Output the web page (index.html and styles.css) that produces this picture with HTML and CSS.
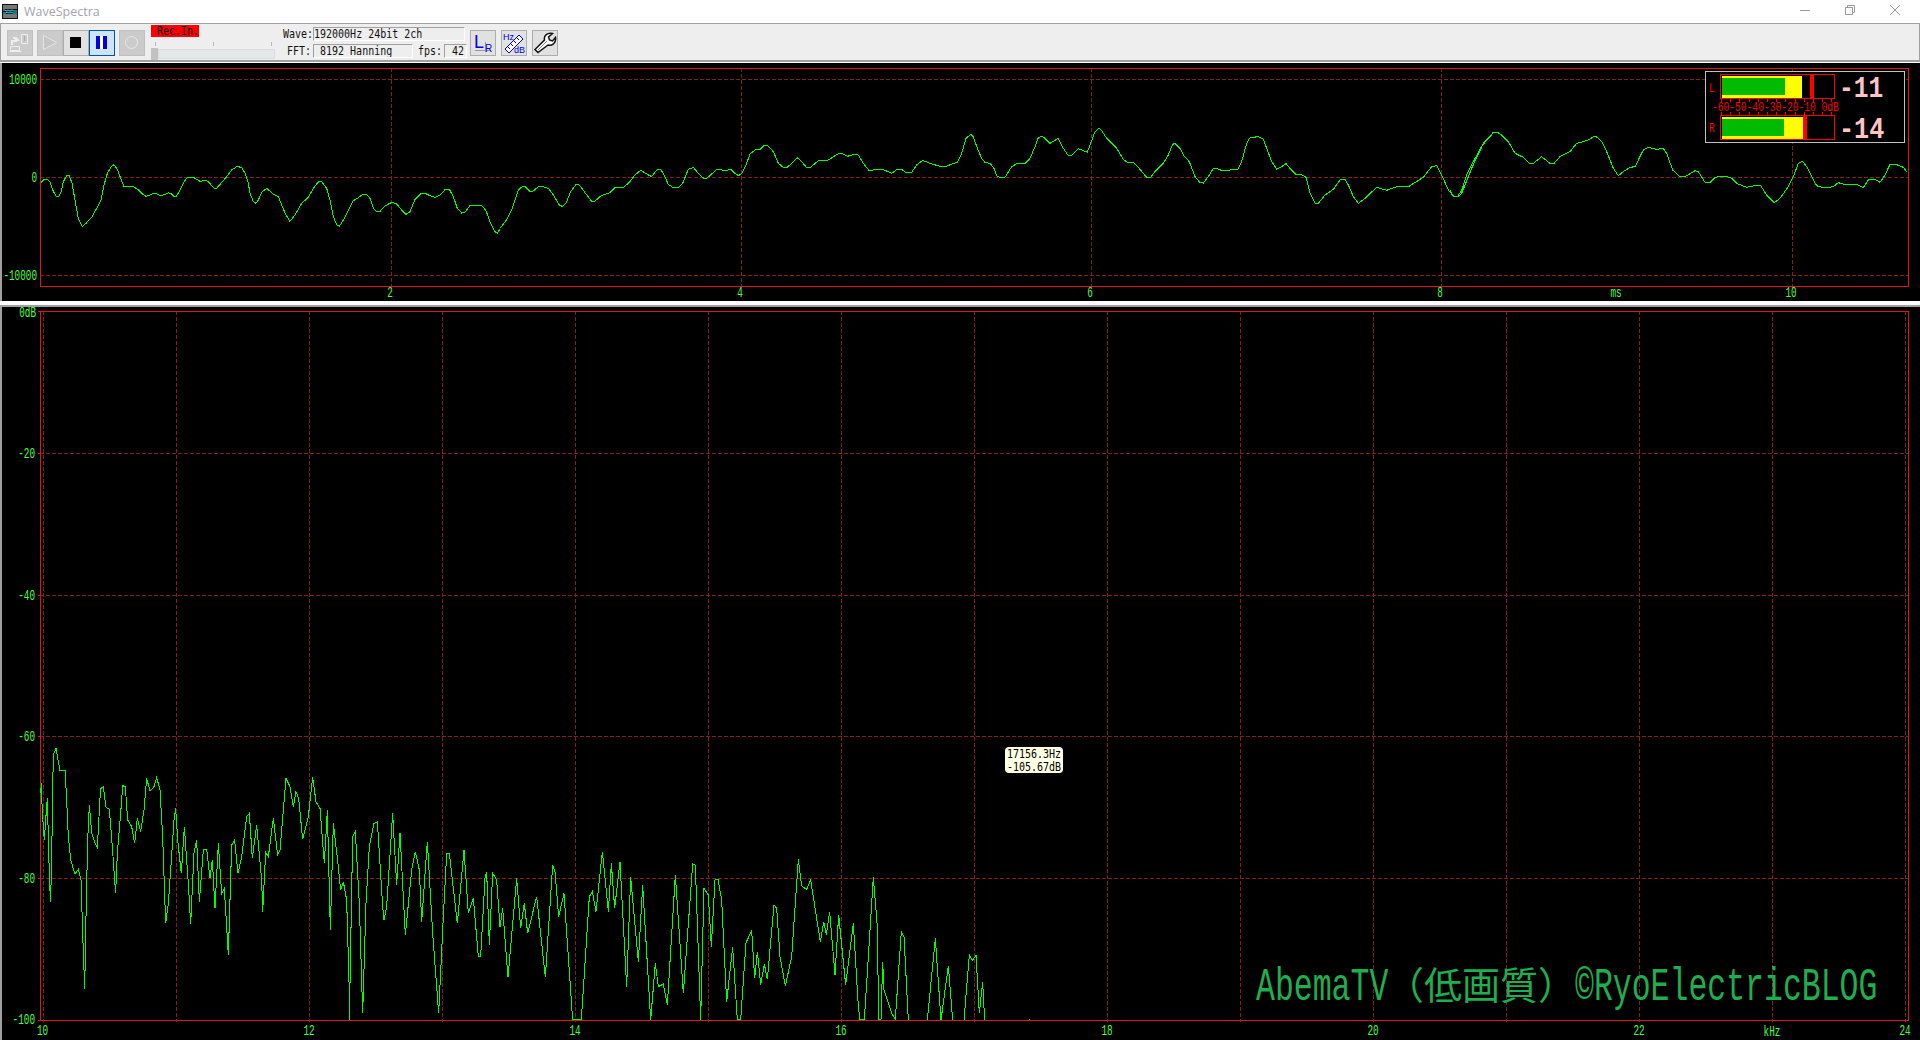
FILE: index.html
```html
<!DOCTYPE html>
<html lang="en">
<head>
    <meta charset="UTF-8">
    <title>WaveSpectra</title>
    <link rel="stylesheet" href="styles.css">
</head>
<body>
    <div class="titlebar">
        <svg class="app-icon" width="16" height="15" viewBox="0 0 16 15">
            <rect width="16" height="15" fill="#111"/>
            <path d="M1 2h14M1 4h14" stroke="#ddd"/>
            <path d="M1 6h2l1 1 2-1 2 1 2-1 2 1h3M1 9h3l1-1 2 1 2-1 2 1h4" stroke="#28d8e8" fill="none"/>
            <path d="M1 11h14M1 13h14" stroke="#ddd"/>
        </svg>
        <span class="app-name">WaveSpectra</span>
        <div class="win-controls">
            <svg width="10" height="10" viewBox="0 0 10 10"><path d="M0 5.5h10" stroke="#999"/></svg>
            <svg width="10" height="10" viewBox="0 0 10 10"><path d="M.5 2.5h7v7h-7zM2.5 2.5v-2h7v7h-2" fill="none" stroke="#999"/></svg>
            <svg width="10" height="10" viewBox="0 0 10 10"><path d="M0 0l10 10M10 0L0 10" stroke="#999"/></svg>
        </div>
    </div>

    <div class="toolbar">
        <div class="tool-btn off first">
            <svg width="25" height="25" viewBox="0 0 25 25" fill="none" stroke="#eee">
                <path d="M14.500 4.500h6v9h-6zM3.500 16.500h9v4h-9zM2.500 21.500h12"/>
                <path d="M5 15v-4h4V8l-3 0M9 8l3 3" stroke-width="2"/>
                <path d="M17.500 6v5" stroke="#aaa"/>
            </svg>
        </div>
        <div class="tool-btn off gap">
            <svg width="25" height="25" viewBox="0 0 25 25"><path d="M6.500 5.500l13 7-13 7z" fill="#c4c4c4" stroke="#e6e6e6"/></svg>
        </div>
        <div class="tool-btn">
            <svg width="25" height="25" viewBox="0 0 25 25"><rect x="7" y="7" width="11" height="11" fill="#000"/></svg>
        </div>
        <div class="tool-btn on">
            <svg width="25" height="25" viewBox="0 0 25 25">
                <rect x="7" y="6" width="11" height="13" fill="#fff"/>
                <path d="M7 6h4v13H7zM14 6h4v13h-4z" fill="#0000e0"/>
            </svg>
        </div>
        <div class="tool-btn off gap">
            <svg width="25" height="25" viewBox="0 0 25 25"><circle cx="12.500" cy="12.500" r="6" fill="none" stroke="#e8e8e8"/></svg>
        </div>

        <div class="rec-group">
            <div class="rec-label"><span class="px-text">Rec.In.</span></div>
            <div class="slider-ticks"><i></i><i></i><i></i></div>
            <div class="slider">
                <div class="slider-thumb"></div>
                <div class="slider-track"></div>
            </div>
        </div>

        <div class="info">
            <div class="info-row">
                <div class="info-label wide"><span class="px-text">Wave:</span></div>
                <div class="info-box wave-box"><span class="px-text">192000Hz 24bit 2ch</span></div>
            </div>
            <div class="info-row">
                <div class="info-label wide"><span class="px-text">FFT:</span></div>
                <div class="info-box fft-box"><span class="px-text">8192 Hanning</span></div>
                <div class="info-label fps"><span class="px-text">fps:</span></div>
                <div class="info-box fps-box"><span class="px-text">42</span></div>
            </div>
        </div>

        <div class="tool-btn gap-wide">
            <svg width="25" height="25" viewBox="0 0 25 25">
                <path d="M5 20.500h16M15.500 12v10" stroke="#999" fill="none"/>
                <text class="btn-letter" x="4" y="18" font-size="18">L</text>
                <text class="btn-letter" x="15" y="22" font-size="10">R</text>
            </svg>
        </div>
        <div class="tool-btn gap-wide">
            <svg width="25" height="25" viewBox="0 0 25 25">
                <path d="M4 19L18 5l4 4L8 23z" fill="#fff" stroke="#0000d0"/>
                <path d="M7 17l2 2M10 14l2 2M13 11l2 2M16 8l2 2" stroke="#0000d0"/>
                <text class="btn-letter" x="2" y="10" font-size="9">Hz</text>
                <text class="btn-letter" x="13" y="23" font-size="9">dB</text>
            </svg>
        </div>
        <div class="tool-btn gap-wide">
            <svg width="25" height="25" viewBox="0 0 25 25">
                <path d="M3 19.500L12.500 10c-1-4 3-8 8-6.500l-4 3.500 1 3 3 1 3-3.500c1 5-3.500 9-7.500 7.500L6 22.500z" fill="#fff" stroke="#111" stroke-width="1.500"/>
                <path d="M6 20l9-9" stroke="#888"/>
            </svg>
        </div>
    </div>

    <div class="panel wave-panel">
        <svg class="plot" width="1918" height="238" viewBox="2 63 1918 238">
            <path class="grid" d="M40 79.500H1909M40 177.500H1909M40 275.500H1909M391.500 68V289M741.500 68V289M1091.500 68V289M1441.500 68V289M1792.500 68V289"/>
            <rect class="frame" x="40.500" y="68.500" width="1868" height="218"/>

            <text class="tick-label" text-anchor="end" transform="translate(37 84) scale(.667 1)">10000</text>
            <text class="tick-label" text-anchor="end" transform="translate(37 182) scale(.667 1)">0</text>
            <text class="tick-label" text-anchor="end" transform="translate(37 280) scale(.667 1)">-10000</text>
            <text class="tick-label" text-anchor="middle" transform="translate(390 297) scale(.667 1)">2</text>
            <text class="tick-label" text-anchor="middle" transform="translate(740 297) scale(.667 1)">4</text>
            <text class="tick-label" text-anchor="middle" transform="translate(1090 297) scale(.667 1)">6</text>
            <text class="tick-label" text-anchor="middle" transform="translate(1440 297) scale(.667 1)">8</text>
            <text class="tick-label" text-anchor="middle" transform="translate(1791 297) scale(.667 1)">10</text>
            <text class="tick-label" text-anchor="middle" transform="translate(1616 297) scale(.667 1)">ms</text>

            <polyline class="trace" transform="translate(0 60) scale(.33333)" points="122,370 130,360 140,357 150,365 158,390 168,408 176,411 184,395 190,365 200,347 208,347 216,370 225,420 235,475 247,499 258,490 275,472 290,445 303,420 312,375 322,340 335,318 342,314 352,328 362,355 372,380 385,381 400,380 412,387 425,400 438,409 450,405 460,400 470,401 482,408 495,403 505,398 515,402 522,410 530,408 540,390 552,365 562,352 580,352 590,358 600,364 618,361 628,368 640,383 648,387 660,373 680,350 695,330 712,319 725,323 735,340 745,370 750,400 760,425 768,430 775,420 785,397 800,385 812,395 820,403 835,410 845,435 858,465 870,484 885,465 905,430 925,412 940,385 955,366 965,365 980,385 990,420 1000,470 1010,495 1018,499 1030,480 1045,450 1060,422 1075,413 1090,402 1100,403 1110,415 1120,445 1130,454 1140,454 1155,438 1175,427 1190,432 1205,450 1218,463 1230,455 1245,418 1262,401 1275,400 1290,407 1305,412 1320,405 1335,389 1348,388 1360,410 1372,445 1385,459 1395,457 1410,437 1425,436 1445,436 1458,452 1470,485 1485,515 1492,520 1500,507"/>
            <polyline class="trace" transform="translate(500 60) scale(.33333)" points="0,505 18,482 35,450 55,390 68,379 75,380 90,394 100,393 115,380 130,380 145,385 160,405 178,435 187,439 198,430 212,395 228,374 238,375 255,398 275,424 285,423 305,406 330,398 345,383 372,381 390,365 405,345 422,331 440,342 455,350 470,330 482,328 490,340 505,373 520,383 535,383 548,370 565,328 580,322 595,340 610,354 620,355 650,329 680,331 692,327 705,340 716,347 725,340 738,315 750,282 765,270 778,270 792,257 803,257 820,275 835,310 850,322 862,322 892,293 905,305 920,323 930,323 955,302 985,300 1015,281 1025,280 1042,289 1060,284 1075,285 1090,310 1108,333 1125,328 1148,328 1175,340 1190,329 1205,328 1218,338 1235,337 1250,315 1268,301 1290,310 1320,319 1340,319 1360,310 1372,308 1385,280 1398,235 1412,223 1420,230 1432,265 1445,295 1455,307 1470,310 1482,325 1490,348 1500,352"/>
            <polyline class="trace" transform="translate(1000 60) scale(.33333)" points="0,352 15,352 35,320 50,311 75,311 90,295 105,260 115,233 125,229 135,235 150,250 175,235 190,265 205,287 215,287 235,266 250,272 262,276 272,250 285,215 297,205 305,212 320,235 350,265 370,298 380,306 400,308 415,322 440,352 452,352 465,335 490,310 505,285 518,253 525,250 540,265 550,285 568,305 585,350 600,368 610,369 625,350 640,325 650,325 668,333 690,330 712,330 725,305 740,250 750,233 775,230 790,238 800,265 815,305 830,327 845,320 858,311 870,325 890,345 905,344 918,352 930,400 945,430 955,430 975,405 1000,388 1020,360 1035,357 1045,375 1060,410 1075,430 1095,415 1130,382 1160,391 1190,380 1225,380 1270,352 1295,320 1310,317 1325,345 1345,390 1360,408 1375,410 1385,400 1415,325 1448,255 1480,218 1495,218 1500,222"/>
            <polyline class="trace" transform="translate(1450 120) scale(.33333)" points="0,210 10,228 22,230 35,212 50,165 70,125 100,70 130,37 140,37 155,45 175,65 195,100 220,112 240,132 250,130 275,110 300,130 312,130 330,110 360,95 380,70 410,62 430,51 440,51 455,65 470,95 490,145 505,167 520,155 540,142 555,140 565,120 580,90 595,82 620,88 640,85 650,100 668,150 690,170 705,170 735,152 745,155 765,187 780,187 795,172 825,168 845,175 860,190 890,202 915,197 932,197 950,225 973,248 990,235 1015,200 1030,170 1045,130 1058,124 1070,140 1095,190 1105,200 1130,203 1150,200 1165,188 1190,195 1220,193 1240,203 1255,180 1275,178 1290,187 1305,165 1320,133 1335,132 1360,142 1370,155"/>

            <!-- level meter, painted on the same canvas -->
            <rect class="vu-box" x="1705.500" y="71.500" width="199" height="71"/>
            <rect class="vu-bar" x="1720.500" y="74.500" width="114" height="24"/>
            <rect x="1722" y="76" width="80" height="22" fill="#ff0"/>
            <rect x="1722" y="78" width="63" height="17" fill="#00bb00"/>
            <rect x="1810" y="75" width="4" height="23" fill="#f00"/>
            <rect class="vu-bar" x="1720.500" y="115.500" width="114" height="24"/>
            <rect x="1722" y="117" width="81" height="22" fill="#ff0"/>
            <rect x="1722" y="119" width="62" height="17" fill="#00bb00"/>
            <rect x="1803" y="116" width="4" height="23" fill="#f00"/>
            <path class="vu-ticks" d="M1721 100.500H1835M1721 113.500H1835"/>
            <text class="vu-text" transform="translate(1709 92) scale(.74 1)">L</text>
            <text class="vu-text" transform="translate(1709 132) scale(.74 1)">R</text>
            <text class="vu-text" transform="translate(1712 111) scale(.74 1)">-60-50-40-30-20-10 0dB</text>
            <text class="vu-num" transform="translate(1839 97) scale(.82 1)">-11</text>
            <text class="vu-num" transform="translate(1839 138) scale(.84 1)">-14</text>
        </svg>
    </div>

    <div class="panel spectrum-panel">
        <svg class="plot" width="1918" height="733" viewBox="2 307 1918 733">
            <path class="grid" d="M40 453.500H1909M40 595.500H1909M40 736.500H1909M40 878.500H1909M43.500 311V1022M176.500 311V1022M309.500 311V1022M442.500 311V1022M575.500 311V1022M708.500 311V1022M841.500 311V1022M974.500 311V1022M1107.500 311V1022M1240.500 311V1022M1373.500 311V1022M1506.500 311V1022M1639.500 311V1022M1772.500 311V1022M1905.500 311V1022"/>
            <path class="frame-tick" d="M38 311.500h3M38 453.500h3M38 595.500h3M38 736.500h3M38 878.500h3M38 1020.500h3"/>
            <rect class="frame" x="40.500" y="311.500" width="1868" height="709"/>

            <text class="tick-label" text-anchor="end" transform="translate(36 317) scale(.667 1)">0dB</text>
            <text class="tick-label" text-anchor="end" transform="translate(35 458) scale(.667 1)">-20</text>
            <text class="tick-label" text-anchor="end" transform="translate(35 600) scale(.667 1)">-40</text>
            <text class="tick-label" text-anchor="end" transform="translate(35 741) scale(.667 1)">-60</text>
            <text class="tick-label" text-anchor="end" transform="translate(35 883) scale(.667 1)">-80</text>
            <text class="tick-label" text-anchor="end" transform="translate(35 1024) scale(.667 1)">-100</text>
            <text class="tick-label" text-anchor="middle" transform="translate(42.500 1035) scale(.667 1)">10</text>
            <text class="tick-label" text-anchor="middle" transform="translate(309 1035) scale(.667 1)">12</text>
            <text class="tick-label" text-anchor="middle" transform="translate(575 1035) scale(.667 1)">14</text>
            <text class="tick-label" text-anchor="middle" transform="translate(841 1035) scale(.667 1)">16</text>
            <text class="tick-label" text-anchor="middle" transform="translate(1107 1035) scale(.667 1)">18</text>
            <text class="tick-label" text-anchor="middle" transform="translate(1373 1035) scale(.667 1)">20</text>
            <text class="tick-label" text-anchor="middle" transform="translate(1639 1035) scale(.667 1)">22</text>
            <text class="tick-label" text-anchor="middle" transform="translate(1772 1036) scale(.667 1)">kHz</text>
            <text class="tick-label" text-anchor="middle" transform="translate(1905 1035) scale(.667 1)">24</text>

            <polyline class="trace" transform="translate(0 720) scale(.33333)" points="122,220 124,190 127,280 133,360 137,300 142,235 146,390 149,495 152,545 157,300 158,175 162,100 168,85 175,125 180,152 195,150 200,240 205,350 212,420 225,462 235,448 243,480 248,640 252,750 254,808 258,590 263,360 268,255 275,340 285,370 292,382 300,235 303,205 310,200 318,262 328,268 337,380 345,495 347,518 352,400 362,280 368,197 376,200 383,300 395,320 404,370 412,295 422,335 432,270 440,175 450,213 462,200 470,172 480,210 488,350 497,610 505,550 512,450 522,300 527,265 534,370 544,460 553,320 565,490 572,612 582,400 590,360 598,545 610,390 620,388 630,475 637,420 645,565 655,370 665,520 673,505 685,705 695,375 704,360 714,460 725,410 740,290 748,280 757,415 770,315 785,480 788,575 797,397 805,410 820,295 833,405 840,390 858,175 870,200 880,260 888,215 896,235 908,358 925,290 938,172 948,245 960,265 973,430 982,270 991,630 1000,310 1015,440 1022,510 1030,485 1040,540 1048,820 1050,900"/>
            <polyline class="trace" transform="translate(340 800) scale(.33333)" points="28,660 38,110 46,95 58,310 68,640 78,310 88,140 102,70 112,65 128,320 132,360 140,320 158,40 170,255 180,98 196,405 215,210 226,155 238,210 245,365 262,125 278,400 296,640 310,350 320,160 328,160 352,370 372,150 385,340 400,295 415,470 422,470 435,235 440,215 448,435 458,220 470,240 480,380 488,325 504,532 530,235 542,385 553,310 563,400 590,290 616,532 638,195 645,215 656,350 672,280 698,660 724,660 748,290 757,275 768,335 787,155 805,335 814,190 824,325 840,185 860,560 872,232 895,485 908,255 932,660 946,490 955,560 970,552 982,615 1006,225 1030,580"/>
            <polyline class="trace" transform="translate(680 820) scale(.33333)" points="10,520 38,132 46,135 62,600 72,205 85,225 94,380 105,180 114,178 125,240 140,545 158,382 172,600 182,600 198,368 215,332 224,475 232,395 242,495 253,432 262,478 282,255 290,265 300,410 316,498 335,410 355,118 365,198 380,208 392,180 421,365 431,305 439,345 449,275 465,465 476,285 497,495 520,310 535,560 540,600 553,600 580,172 592,320 596,600 603,600 608,425 612,510 635,580 646,597 664,335 672,350 685,600"/>
            <polyline class="trace" transform="translate(680 820) scale(.33333)" points="742,600 766,355 783,600 785,585 805,438 818,600"/>
            <polyline class="trace" transform="translate(680 820) scale(.33333)" points="852,600 868,405 878,422 888,405 898,580 908,485 914,600"/>
            <path class="trace" d="M1029 1019h1"/>

            <text class="caption latin" transform="translate(1256 1000) scale(.685 1)">AbemaTV</text>
            <text class="caption cjk" x="1386" y="999">（低画質）</text>
            <text class="caption latin" transform="translate(1575 1000) scale(.685 1)">©RyoElectricBLOG</text>
        </svg>
        <div class="cursor-tip">
            <span class="px-text">17156.3Hz</span>
            <span class="px-text">-105.67dB</span>
        </div>
    </div>
</body>
</html>
```

FILE: styles.css
```css
html, body {
    margin: 0;
    height: 1040px;
    overflow: hidden;
}

body {
    display: flex;
    flex-direction: column;
    background-color: #000;
    font-family: "Liberation Mono", monospace;
}

/* title bar */
.titlebar {
    display: flex;
    align-items: center;
    height: 23px;
    flex: none;
    padding-left: 2px;
    background-color: #fff;
}

.app-icon {
    margin-top: -1px;
}

.app-name {
    margin-left: 6px;
    font-family: "Open Sans", sans-serif;
    font-size: 12.5px;
    color: #a3a3ad;
}

.win-controls {
    display: flex;
    gap: 35px;
    margin-left: auto;
    margin-right: 20px;
    margin-top: -3px;
}

/* toolbar */
.toolbar {
    display: flex;
    align-items: flex-start;
    box-sizing: border-box;
    height: 39px;
    flex: none;
    font-size: 10px;
    line-height: 12px;
    background-color: #eee;
    border-top: 1px solid #a0a0a0;
    border-left: 1px solid #a0a0a0;
    border-right: 1px solid #a0a0a0;
    border-bottom: 2px solid #a0a0a0;
    box-shadow: 0 1px 0 #fff;
    margin-bottom: 1px;
}

.tool-btn {
    box-sizing: border-box;
    width: 26px;
    height: 26px;
    margin-top: 6px;
    flex: none;
    background-color: #e1e1e1;
    border: 1px solid #adadad;
    overflow: hidden;
}

.tool-btn svg {
    display: block;
    margin: -1px;
}

.tool-btn.off {
    background-color: #cbcbcb;
    border-color: #bfbfbf;
}

.tool-btn.on {
    background-color: #cce4f7;
    border: 1px solid #005499;
}

.tool-btn.first { margin-left: 6px; }
.gap { margin-left: 4px; }
.gap-wide { margin-left: 5px; }

.btn-letter {
    font-family: "Liberation Sans", sans-serif;
    fill: #0000e0;
}

.px-text {
    display: block;
    font-size: 10px;
    font-family: "DejaVu Sans Mono", monospace;
    line-height: 12px;
    white-space: pre;
    transform: scaleY(1.2);
}

.rec-group {
    width: 124px;
    margin-left: 6px;
    flex: none;
}

.rec-label {
    width: 48px;
    height: 12px;
    margin-top: 1px;
    padding-left: 6px;
    box-sizing: border-box;
    background-color: #f00;
    color: #000;
}

.slider-ticks {
    display: flex;
    justify-content: space-between;
    width: 117px;
    height: 4px;
    margin: 5px 0 2px 4px;
}

.slider-ticks i {
    width: 1px;
    background-color: #b8b8b8;
}

.slider {
    display: flex;
    align-items: center;
    height: 12px;
}

.slider-thumb {
    width: 7px;
    height: 12px;
    background-color: #c2c2c2;
}

.slider-track {
    width: 117px;
    height: 8px;
    background-color: #e4e8e8;
    border: 1px solid #d8dcdc;
}

.info {
    display: flex;
    flex-direction: column;
    gap: 3px;
    margin-top: 3px;
    margin-left: 8px;
    width: 182px;
    flex: none;
}

.info-row {
    display: flex;
    height: 14px;
}

.info-label {
    padding-top: 1px;
    text-align: right;
    color: #111;
    flex: none;
}

.info-label.wide { width: 28px; margin-right: 2px; }
.info-label.fps { width: 24px; margin: 0 2px 0 5px; }

.info-box {
    box-sizing: border-box;
    height: 14px;
    color: #111;
    border: 1px solid;
    border-color: #a0a0a0 #fff #fff #a0a0a0;
    flex: none;
}

.wave-box { width: 152px; }
.fft-box { width: 100px; padding-left: 6px; }
.fps-box { width: 23px; padding-right: 2px; text-align: right; }

/* plots */
.panel {
    position: relative;
    flex: none;
    border-left: 2px solid #a0a0a0;
}

.wave-panel {
    height: 238px;
    box-shadow: 0 4px 0 #fff;
    margin-bottom: 6px;
}

.wave-panel::after {
    content: "";
    position: absolute;
    left: -2px;
    right: 0;
    top: 242px;
    height: 2px;
    background-color: #a0a0a0;
}

.spectrum-panel {
    height: 733px;
}

.plot {
    display: block;
    overflow: visible;
}

.grid {
    fill: none;
    stroke: #80201f;
    stroke-dasharray: 4 2;
    shape-rendering: crispEdges;
}

.frame {
    fill: none;
    stroke: #dc1818;
    shape-rendering: crispEdges;
}

.frame-tick {
    stroke: #dc1818;
    shape-rendering: crispEdges;
}

.trace {
    fill: none;
    stroke: #00ff00;
    stroke-width: 1;
    vector-effect: non-scaling-stroke;
    shape-rendering: crispEdges;
}

.tick-label {
    font-size: 14px;
    fill: #48ff48;
}

.vu-box {
    fill: #000;
    stroke: #c0c0c0;
    shape-rendering: crispEdges;
}

.vu-bar {
    fill: #000;
    stroke: #f00;
    stroke-width: 1;
    shape-rendering: crispEdges;
}

.vu-ticks {
    stroke: #f00;
    stroke-width: 3;
    stroke-dasharray: 1 8.200;
    shape-rendering: crispEdges;
}

.vu-text {
    font-size: 13px;
    fill: #f00;
}

.vu-num {
    font-size: 30px;
    font-weight: 700;
    fill: #ffc4c4;
}

.caption {
    fill: #1fae50;
}

.caption.latin {
    font-size: 46px;
}

.caption.cjk {
    font-family: "Noto Sans CJK JP", sans-serif;
    font-size: 38px;
}

.cursor-tip {
    position: absolute;
    left: 1003px;
    top: 440px;
    display: flex;
    flex-direction: column;
    align-items: center;
    gap: 1px;
    box-sizing: border-box;
    width: 58px;
    height: 26px;
    padding-top: 1px;
    border-radius: 4px;
    background-color: #ffffe6;
    color: #000;
}
```
